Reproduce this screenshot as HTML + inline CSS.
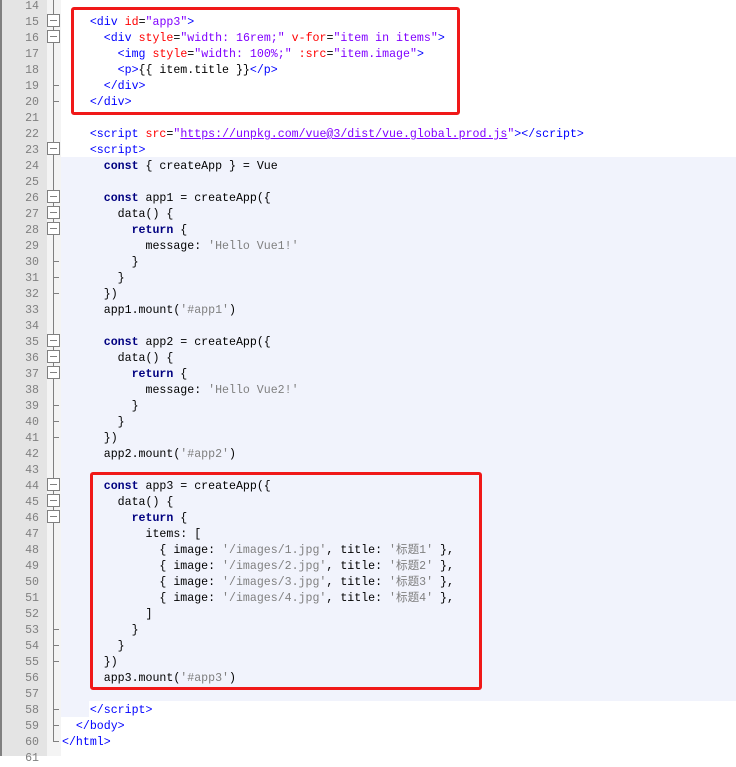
<!DOCTYPE html>
<html><head><meta charset="utf-8"><style>
body{margin:0;width:736px;height:756px;overflow:hidden;background:#fff;position:relative;font-family:"Liberation Mono","Noto Sans CJK SC",monospace;font-size:11.6px}
#lb{position:absolute;left:0;top:0;width:2px;height:756px;background:#808080}
#ln{position:absolute;left:2px;top:0;width:45px;height:756px;background:#e4e4e4}
#fm{position:absolute;left:47px;top:0;width:14px;height:756px;background:#f4f4f4}
#bg{position:absolute;left:61px;top:157px;width:675px;height:544px;background:#f1f3fc}
#bg2{position:absolute;left:61px;top:701px;width:28px;height:16px;background:#f1f3fc}
.n{position:absolute;left:2px;width:37px;text-align:right;color:#808080;height:16px;line-height:16px;margin-top:2px}
.c{position:absolute;left:62px;white-space:pre;height:16px;line-height:16px;color:#000;margin-top:2px}
.t{color:#0000ff}.a{color:#ff0000}.v{color:#8000ff}.k{color:#000080;font-weight:bold}.s{color:#808080}
.u{text-decoration:underline;color:#8000ff}
.box{position:absolute;border:3px solid #f01818;border-radius:3px;box-sizing:border-box}
.fb{position:absolute;left:47px;width:13px;height:13px;border:1px solid #808080;background:#fff;box-sizing:border-box}
.fb:after{content:"";position:absolute;left:2px;right:2px;top:5px;height:1px;background:#808080}
.vl{position:absolute;left:53px;width:1px;background:#808080}
.tk{position:absolute;left:53px;width:6px;height:1px;background:#808080}
</style></head><body>
<div id="lb"></div><div id="ln"></div><div id="fm"></div><div id="bg"></div><div id="bg2"></div>
<div class="vl" style="top:0;height:742px"></div>
<div class="tk" style="top:741px"></div>
<div class="fb" style="top:14px"></div><div class="fb" style="top:30px"></div>
<div class="tk" style="top:85px"></div><div class="tk" style="top:101px"></div>
<div class="fb" style="top:142px"></div>
<div class="fb" style="top:190px"></div><div class="fb" style="top:206px"></div><div class="fb" style="top:222px"></div>
<div class="tk" style="top:261px"></div><div class="tk" style="top:277px"></div><div class="tk" style="top:293px"></div>
<div class="fb" style="top:334px"></div><div class="fb" style="top:350px"></div><div class="fb" style="top:366px"></div>
<div class="tk" style="top:405px"></div><div class="tk" style="top:421px"></div><div class="tk" style="top:437px"></div>
<div class="fb" style="top:478px"></div><div class="fb" style="top:494px"></div><div class="fb" style="top:510px"></div>
<div class="tk" style="top:629px"></div><div class="tk" style="top:645px"></div><div class="tk" style="top:661px"></div>
<div class="tk" style="top:709px"></div><div class="tk" style="top:725px"></div>

<div class="n" style="top:-3px">14</div><div class="n" style="top:13px">15</div><div class="n" style="top:29px">16</div><div class="n" style="top:45px">17</div><div class="n" style="top:61px">18</div><div class="n" style="top:77px">19</div><div class="n" style="top:93px">20</div><div class="n" style="top:109px">21</div><div class="n" style="top:125px">22</div><div class="n" style="top:141px">23</div><div class="n" style="top:157px">24</div><div class="n" style="top:173px">25</div><div class="n" style="top:189px">26</div><div class="n" style="top:205px">27</div><div class="n" style="top:221px">28</div><div class="n" style="top:237px">29</div><div class="n" style="top:253px">30</div><div class="n" style="top:269px">31</div><div class="n" style="top:285px">32</div><div class="n" style="top:301px">33</div><div class="n" style="top:317px">34</div><div class="n" style="top:333px">35</div><div class="n" style="top:349px">36</div><div class="n" style="top:365px">37</div><div class="n" style="top:381px">38</div><div class="n" style="top:397px">39</div><div class="n" style="top:413px">40</div><div class="n" style="top:429px">41</div><div class="n" style="top:445px">42</div><div class="n" style="top:461px">43</div><div class="n" style="top:477px">44</div><div class="n" style="top:493px">45</div><div class="n" style="top:509px">46</div><div class="n" style="top:525px">47</div><div class="n" style="top:541px">48</div><div class="n" style="top:557px">49</div><div class="n" style="top:573px">50</div><div class="n" style="top:589px">51</div><div class="n" style="top:605px">52</div><div class="n" style="top:621px">53</div><div class="n" style="top:637px">54</div><div class="n" style="top:653px">55</div><div class="n" style="top:669px">56</div><div class="n" style="top:685px">57</div><div class="n" style="top:701px">58</div><div class="n" style="top:717px">59</div><div class="n" style="top:733px">60</div><div class="n" style="top:749px">61</div>

<div class="c" style="top:13px">    <span class="t">&lt;div</span> <span class="a">id</span>=<span class="v">"app3"</span><span class="t">&gt;</span></div>
<div class="c" style="top:29px">      <span class="t">&lt;div</span> <span class="a">style</span>=<span class="v">"width: 16rem;"</span> <span class="a">v-for</span>=<span class="v">"item in items"</span><span class="t">&gt;</span></div>
<div class="c" style="top:45px">        <span class="t">&lt;img</span> <span class="a">style</span>=<span class="v">"width: 100%;"</span> <span class="a">:src</span>=<span class="v">"item.image"</span><span class="t">&gt;</span></div>
<div class="c" style="top:61px">        <span class="t">&lt;p&gt;</span>{{ item.title }}<span class="t">&lt;/p&gt;</span></div>
<div class="c" style="top:77px">      <span class="t">&lt;/div&gt;</span></div>
<div class="c" style="top:93px">    <span class="t">&lt;/div&gt;</span></div>
<div class="c" style="top:125px">    <span class="t">&lt;script</span> <span class="a">src</span>=<span class="v">"</span><span class="u">https://unpkg.com/vue@3/dist/vue.global.prod.js</span><span class="v">"</span><span class="t">&gt;&lt;/script&gt;</span></div>
<div class="c" style="top:141px">    <span class="t">&lt;script&gt;</span></div>
<div class="c" style="top:157px">      <span class="k">const</span> { createApp } = Vue</div>
<div class="c" style="top:189px">      <span class="k">const</span> app1 = createApp({</div>
<div class="c" style="top:205px">        data() {</div>
<div class="c" style="top:221px">          <span class="k">return</span> {</div>
<div class="c" style="top:237px">            message: <span class="s">'Hello Vue1!'</span></div>
<div class="c" style="top:253px">          }</div>
<div class="c" style="top:269px">        }</div>
<div class="c" style="top:285px">      })</div>
<div class="c" style="top:301px">      app1.mount(<span class="s">'#app1'</span>)</div>
<div class="c" style="top:333px">      <span class="k">const</span> app2 = createApp({</div>
<div class="c" style="top:349px">        data() {</div>
<div class="c" style="top:365px">          <span class="k">return</span> {</div>
<div class="c" style="top:381px">            message: <span class="s">'Hello Vue2!'</span></div>
<div class="c" style="top:397px">          }</div>
<div class="c" style="top:413px">        }</div>
<div class="c" style="top:429px">      })</div>
<div class="c" style="top:445px">      app2.mount(<span class="s">'#app2'</span>)</div>
<div class="c" style="top:477px">      <span class="k">const</span> app3 = createApp({</div>
<div class="c" style="top:493px">        data() {</div>
<div class="c" style="top:509px">          <span class="k">return</span> {</div>
<div class="c" style="top:525px">            items: [</div>
<div class="c" style="top:541px">              { image: <span class="s">'/images/1.jpg'</span>, title: <span class="s">'标题1'</span> },</div>
<div class="c" style="top:557px">              { image: <span class="s">'/images/2.jpg'</span>, title: <span class="s">'标题2'</span> },</div>
<div class="c" style="top:573px">              { image: <span class="s">'/images/3.jpg'</span>, title: <span class="s">'标题3'</span> },</div>
<div class="c" style="top:589px">              { image: <span class="s">'/images/4.jpg'</span>, title: <span class="s">'标题4'</span> },</div>
<div class="c" style="top:605px">            ]</div>
<div class="c" style="top:621px">          }</div>
<div class="c" style="top:637px">        }</div>
<div class="c" style="top:653px">      })</div>
<div class="c" style="top:669px">      app3.mount(<span class="s">'#app3'</span>)</div>
<div class="c" style="top:701px">    <span class="t">&lt;/script&gt;</span></div>
<div class="c" style="top:717px">  <span class="t">&lt;/body&gt;</span></div>
<div class="c" style="top:733px"><span class="t">&lt;/html&gt;</span></div>

<div class="box" style="left:71px;top:7px;width:389px;height:108px"></div>
<div class="box" style="left:90px;top:472px;width:392px;height:218px"></div>
</body></html>
